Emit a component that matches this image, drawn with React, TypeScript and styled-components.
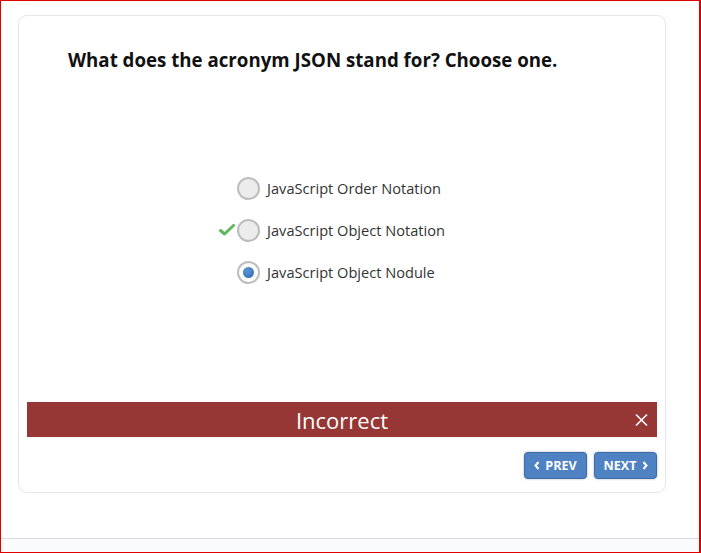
import React from "react";
import styled, { createGlobalStyle } from "styled-components";

const Global = createGlobalStyle`
  html, body { margin: 0; padding: 0; background: #fff; }
  body { font-family: "Open Sans", "Liberation Sans", sans-serif; }
`;

const Frame = styled.div`
  box-sizing: border-box;
  width: 701px;
  height: 553px;
  border: 1px solid #e00000;
  border-right-width: 2px;
  display: flex;
  flex-direction: column;
`;

const Stage = styled.div`
  flex: 1;
  padding: 14px 0 0 17px;
`;

const Card = styled.div`
  box-sizing: border-box;
  width: 648px;
  height: 478px;
  border: 1px solid #e6e6e6;
  border-radius: 9px;
  background: #fff;
  display: flex;
  flex-direction: column;
`;

const Question = styled.h1`
  margin: 31px 0 0 49px;
  font-size: 18.7px;
  line-height: 26px;
  font-weight: 700;
  color: #111;
`;

const Options = styled.div`
  align-self: center;
  margin-top: 103px;
  margin-left: -2px;
  display: flex;
  flex-direction: column;
  gap: 18px;
`;

const Option = styled.label`
  position: relative;
  display: flex;
  align-items: center;
  gap: 7px;
  height: 24px;
  font-size: 14.6px;
  color: #333;
`;

const Radio = styled.span<{ $checked?: boolean }>`
  box-sizing: border-box;
  width: 23px;
  height: 23px;
  border-radius: 50%;
  border: 2px solid #bdbdbd;
  background: ${(p) => (p.$checked ? "#fff" : "#ececec")};
  display: flex;
  align-items: center;
  justify-content: center;
  &::after {
    content: "";
    display: ${(p) => (p.$checked ? "block" : "none")};
    width: 11px;
    height: 11px;
    border-radius: 50%;
    background: radial-gradient(circle at 40% 35%, #5b95d6, #2f67b0);
  }
`;

const Check = styled.svg`
  position: absolute;
  left: -18px;
  top: 6px;
`;

const Feedback = styled.div`
  margin: auto 8px 0 8px;
  height: 35px;
  background: #963735;
  color: #fff;
  display: flex;
  align-items: center;
  justify-content: center;
  position: relative;
  font-size: 22px;
  font-weight: 400;
`;

const Close = styled.span`
  position: absolute;
  right: 9px;
  top: 50%;
  transform: translateY(-50%);
  display: flex;
`;

const Nav = styled.div`
  display: flex;
  justify-content: flex-end;
  gap: 7px;
  padding: 15px 8px 13px 0;
`;

const NavButton = styled.button`
  box-sizing: border-box;
  width: 63px;
  height: 27px;
  border: 1px solid #3e6da6;
  border-radius: 4px;
  background: #4e82c2;
  box-shadow: 0 0 2px rgba(40, 70, 110, 0.5);
  color: #fff;
  font-family: "Open Sans", "Liberation Sans", sans-serif;
  font-weight: 700;
  font-size: 12.6px;
  display: flex;
  align-items: center;
  justify-content: center;
  gap: 5px;
  padding: 0;
`;

const Footer = styled.div`
  height: 13px;
  border-top: 1px solid #dcdcdc;
  background: #fafbfc;
`;

const Chevron = ({ dir }: { dir: "left" | "right" }) => (
  <svg width="6" height="9" viewBox="0 0 6 9">
    <path
      d={dir === "left" ? "M4.5 1 L1.5 4.5 L4.5 8" : "M1.5 1 L4.5 4.5 L1.5 8"}
      fill="none"
      stroke="#fff"
      strokeWidth="2"
    />
  </svg>
);

export default function App() {
  return (
    <>
      <Global />
      <Frame>
        <Stage>
          <Card>
            <Question>What does the acronym JSON stand for? Choose one.</Question>
            <Options>
              <Option>
                <Radio />
                JavaScript Order Notation
              </Option>
              <Option>
                <Check width="16" height="12" viewBox="0 0 16 12">
                  <path d="M1.5 6.5 L5.5 10 L14.5 1.5" fill="none" stroke="#5cb85c" strokeWidth="3" strokeLinecap="round" strokeLinejoin="round" />
                </Check>
                <Radio />
                JavaScript Object Notation
              </Option>
              <Option>
                <Radio $checked />
                JavaScript Object Nodule
              </Option>
            </Options>
            <Feedback>
              Incorrect
              <Close>
                <svg width="13" height="13" viewBox="0 0 13 13">
                  <path d="M1 1 L12 12 M12 1 L1 12" stroke="#fff" strokeWidth="1.6" />
                </svg>
              </Close>
            </Feedback>
            <Nav>
              <NavButton>
                <Chevron dir="left" />
                PREV
              </NavButton>
              <NavButton>
                NEXT
                <Chevron dir="right" />
              </NavButton>
            </Nav>
          </Card>
        </Stage>
        <Footer />
      </Frame>
    </>
  );
}
